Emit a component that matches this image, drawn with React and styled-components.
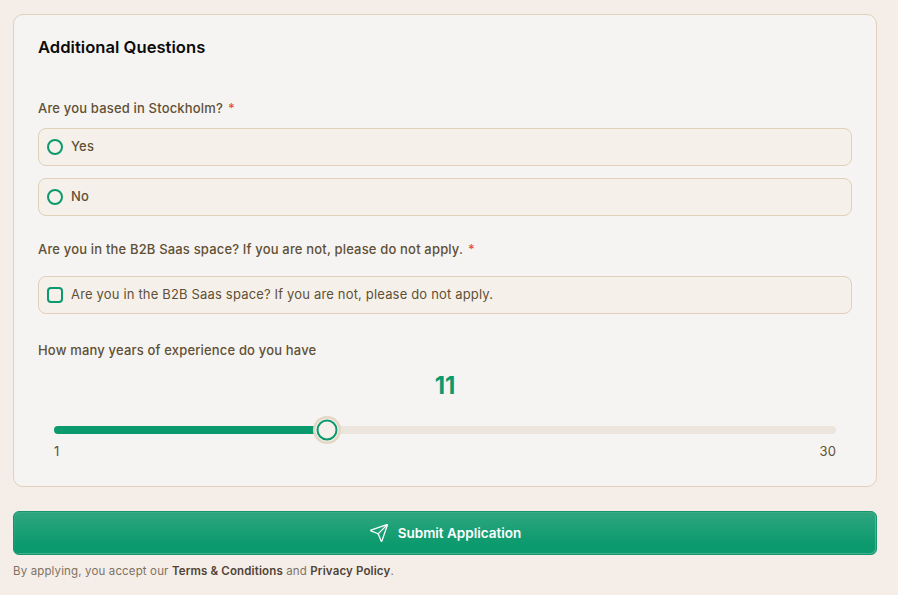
import React from "react";
import styled, { createGlobalStyle } from "styled-components";
import { Send } from "lucide-react";

const Global = createGlobalStyle`
  html, body { margin: 0; padding: 0; background: #f5ede8; }
  body { font-family: Inter, "Liberation Sans", sans-serif; -webkit-font-smoothing: antialiased; }
`;

const Page = styled.div`
  width: 898px;
  height: 595px;
  overflow: hidden;
  box-sizing: border-box;
  padding: 14px 21px 0 13px;
  background: #f5ede8;
`;

const Card = styled.section`
  box-sizing: border-box;
  height: 473px;
  padding: 22px 24px 0;
  background: #f6f4f2;
  border: 1px solid #dfd1bb;
  border-radius: 10px;
`;

const Title = styled.h2`
  margin: 0;
  font-size: 16.6px;
  line-height: 20px;
  font-weight: 600;
  letter-spacing: 0.02px;
  color: #0b0b0b;
`;

const Question = styled.label`
  display: block;
  margin-top: ${(p) => p.$top}px;
  font-size: 13px;
  line-height: 18px;
  font-weight: 500;
  letter-spacing: 0.17px;
  color: #5f5035;
`;

const Required = styled.span`
  margin-left: 5px;
  color: #ea4f3f;
`;

const Option = styled.div`
  box-sizing: border-box;
  height: 38px;
  margin-top: ${(p) => p.$top}px;
  padding: 0 8px;
  display: flex;
  align-items: center;
  gap: 8px;
  background: #f6f0ea;
  border: 1px solid #dfd1bb;
  border-radius: 8px;
  font-size: 13px;
  letter-spacing: 0.17px;
  font-weight: ${(p) => (p.$regular ? 400 : 500)};
  color: #5f5035;
`;

const OptionText = styled.span`
  margin-top: -2px;
`;

const Radio = styled.span`
  box-sizing: border-box;
  width: 16px;
  height: 16px;
  flex: none;
  border: 2px solid #0b9a6d;
  border-radius: 50%;
`;

const Check = styled.span`
  box-sizing: border-box;
  width: 16px;
  height: 16px;
  flex: none;
  border: 2px solid #0b9a6d;
  border-radius: 4px;
`;

const Value = styled.div`
  margin-top: 12px;
  text-align: center;
  font-size: 24px;
  line-height: 30px;
  font-weight: 700;
  color: #0b9a6d;
`;

const SliderWrap = styled.div`
  margin: 25px 16px 0;
`;

const Track = styled.div`
  position: relative;
  height: 8px;
  border-radius: 4px;
  background: #ebe5de;
`;

const Fill = styled.div`
  height: 100%;
  border-radius: 4px 0 0 4px;
  background: #0b9a6d;
`;

const Thumb = styled.div`
  position: absolute;
  top: 50%;
  box-sizing: border-box;
  width: 21px;
  height: 21px;
  transform: translate(-50%, -50%);
  border-radius: 50%;
  border: 2.5px solid #0b9a6d;
  background: #f6f0ea;
  box-shadow: 0 0 0 1px #f6f0ea, 0 0 0 3.5px #e3d7c6;
`;

const Scale = styled.div`
  margin-top: 8px;
  display: flex;
  justify-content: space-between;
  font-size: 13px;
  letter-spacing: 0.1px;
  line-height: 18px;
  color: #5f5035;
`;

const Submit = styled.button`
  box-sizing: border-box;
  display: flex;
  align-items: center;
  justify-content: center;
  gap: 9px;
  width: 100%;
  height: 44px;
  margin-top: 24px;
  padding-bottom: 2px;
  background: linear-gradient(180deg, #2fa67f 0%, #0b9a6d 78%);
  border: 1px solid #17946d;
  border-radius: 6px;
  box-shadow: inset -1px -1px 0 0 rgba(255, 255, 255, 0.22), inset 1px 1px 0 0 rgba(255, 255, 255, 0.06);
  color: #fff;
  font-family: inherit;
  font-size: 13.5px;
  font-weight: 600;
`;

const Legal = styled.p`
  margin: 8px 0 0;
  font-size: 11.5px;
  letter-spacing: 0.14px;
  line-height: 16px;
  color: #7f7263;
`;

const Strong = styled.strong`
  font-weight: 600;
  color: #4f4436;
`;

export default function App() {
  const pct = (273 / 782) * 100;
  return (
    <Page>
      <Global />
      <Card>
        <Title>Additional Questions</Title>
        <Question $top={42}>
          Are you based in Stockholm?<Required>*</Required>
        </Question>
        <Option $top={11}><Radio /><OptionText>Yes</OptionText></Option>
        <Option $top={12}><Radio /><OptionText>No</OptionText></Option>
        <Question $top={24}>
          Are you in the B2B Saas space? If you are not, please do not apply.<Required>*</Required>
        </Question>
        <Option $top={18} $regular><Check /><OptionText>Are you in the B2B Saas space? If you are not, please do not apply.</OptionText></Option>
        <Question $top={27}>How many years of experience do you have</Question>
        <Value>11</Value>
        <SliderWrap>
          <Track>
            <Fill style={{ width: `${pct}%` }} />
            <Thumb style={{ left: `${pct}%` }} />
          </Track>
          <Scale><span>1</span><span>30</span></Scale>
        </SliderWrap>
      </Card>
      <Submit><Send size={20} strokeWidth={1.5} />Submit Application</Submit>
      <Legal>
        By applying, you accept our <Strong>Terms &amp; Conditions</Strong> and <Strong>Privacy Policy</Strong>.
      </Legal>
    </Page>
  );
}
